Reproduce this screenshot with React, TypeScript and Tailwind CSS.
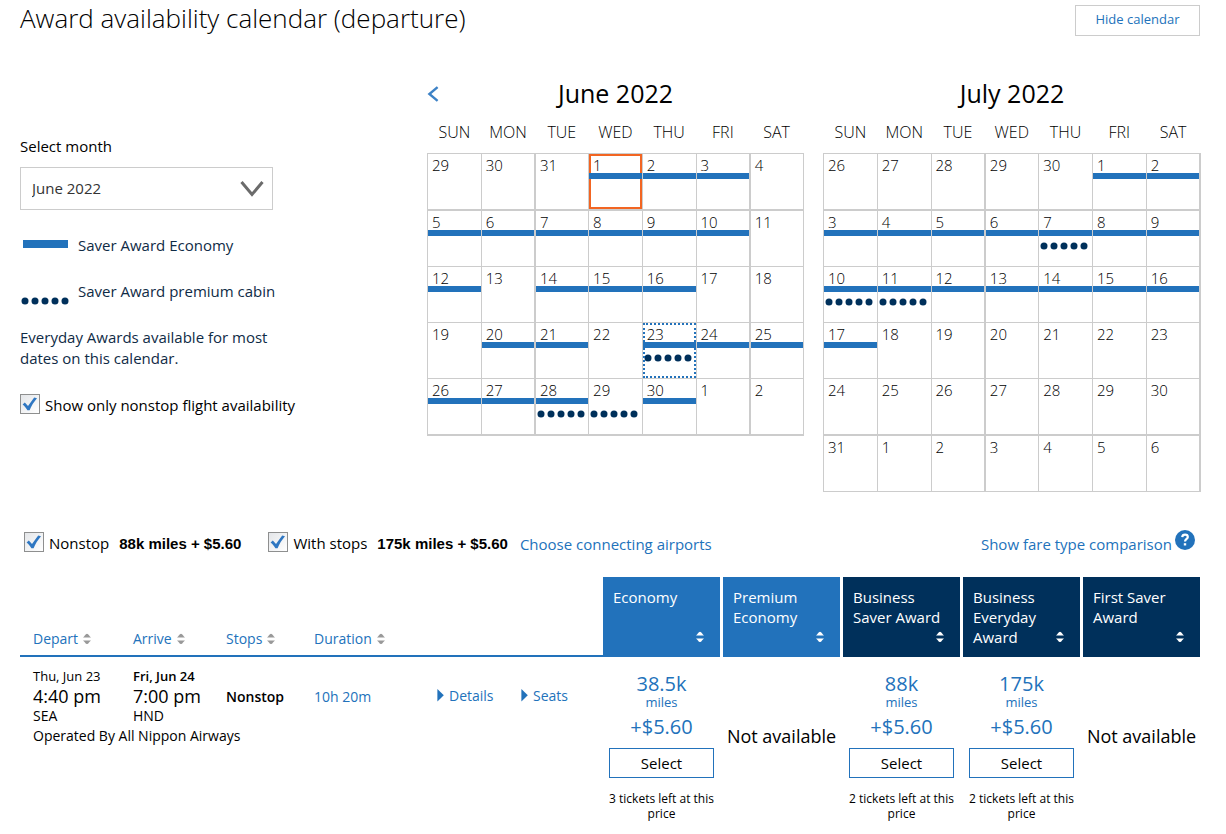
import { useState } from "react";
import clsx from "clsx";

type Day = {
  date: number;
  economy?: boolean;
  premium?: boolean;
  state?: "current" | "selected";
};

type Fare = {
  name: string;
  dark?: boolean;
  miles?: string;
  tickets?: number;
};

const weekDays = ["SUN", "MON", "TUE", "WED", "THU", "FRI", "SAT"];

// e = saver economy, p = saver premium cabin, b = both, c = current day, s = selected day
const parseDays = (source: string): Day[] =>
  source.split(" ").map((item) => {
    const flag = item.replace(/\d/g, "");
    return {
      date: parseInt(item),
      economy: flag === "e" || flag === "b" || flag === "c" || flag === "s",
      premium: flag === "p" || flag === "b" || flag === "s",
      state: flag === "c" ? "current" : flag === "s" ? "selected" : undefined,
    };
  });

const june = parseDays(
  "29 30 31 1c 2e 3e 4 5e 6e 7e 8e 9e 10e 11 12e 13 14e 15e 16e 17 18 19 20e 21e 22 23s 24e 25e 26e 27e 28b 29p 30e 1 2"
);
const july = parseDays(
  "26 27 28 29 30 1e 2e 3e 4e 5e 6e 7b 8e 9e 10b 11b 12e 13e 14e 15e 16e 17e 18 19 20 21 22 23 24 25 26 27 28 29 30 31 1 2 3 4 5 6"
);

const fares: Fare[] = [
  { name: "Economy", miles: "38.5k", tickets: 3 },
  { name: "Premium Economy" },
  { name: "Business Saver Award", dark: true, miles: "88k", tickets: 2 },
  { name: "Business Everyday Award", dark: true, miles: "175k", tickets: 2 },
  { name: "First Saver Award", dark: true },
];

const Dots = () => (
  <svg width="48" height="8" viewBox="0 0 48 8" fill="#00305b" className="block">
    {[4, 14, 24, 34, 44].map((x) => (
      <circle key={x} cx={x} cy="4" r="3.5" />
    ))}
  </svg>
);

const SortIcon = ({ className }: { className?: string }) => (
  <svg width="8" height="12" viewBox="0 0 8 12" fill="currentColor" className={className}>
    <path d="M0 4.4C1.6 3.6 2.4 .8 4 .8s2.4 2.8 4 3.6zM0 7.4h8C6.4 8.2 5.6 11 4 11S1.6 8.2 0 7.4z" />
  </svg>
);

const Checkbox = ({ id, label }: { id: string; label: string }) => {
  const [checked, setChecked] = useState(true);

  return (
    <div className="flex items-start gap-[5px]">
      <span className="relative size-5 shrink-0">
        <input
          type="checkbox"
          id={id}
          checked={checked}
          onChange={(e) => setChecked(e.target.checked)}
          className="block size-5 appearance-none border border-[#8e8f8f] bg-linear-to-br from-[#e4e6e9] to-white"
        />
        {checked && (
          <svg viewBox="0 0 20 20" className="pointer-events-none absolute inset-0 size-5" fill="#2f77c2">
            <path d="M2.6 10.4 4.8 8.6 8 12 14.2 3.4 17 4.2C13.8 8 11.2 12 9.6 16.2H7.4C6.2 13.8 4.6 12.2 2.6 10.4z" />
          </svg>
        )}
      </span>
      <label htmlFor={id} className="pt-px">
        {label}
      </label>
    </div>
  );
};

type CalendarProps = {
  title: string;
  days: Day[];
  hasPrev?: boolean;
  wideCols: number[];
};

const Calendar = ({ title, days, hasPrev, wideCols }: CalendarProps) => {
  const weeks = Array.from({ length: days.length / 7 }, (_, i) => days.slice(i * 7, i * 7 + 7));

  return (
    <table className="w-full table-fixed border-collapse self-start">
      <caption>
        <div className="grid h-9 grid-cols-[24px_1fr_24px] items-center text-[25px] leading-[34px]">
          {hasPrev ? (
            <button type="button" aria-label="Previous month">
              <svg width="12" height="16" viewBox="0 0 12 16" fill="none" stroke="#3d82c6" strokeWidth="2.4">
                <path d="M10.6 1.2 2.4 8l8.2 6.8" />
              </svg>
            </button>
          ) : (
            <span />
          )}
          <span className="pb-0.5">{title}</span>
        </div>
      </caption>
      <thead>
        <tr className="h-[41px]">
          {weekDays.map((day) => (
            <th key={day} scope="col" className="p-0 text-base font-light">
              {day}
            </th>
          ))}
        </tr>
      </thead>
      <tbody>
        {weeks.map((week, row) => (
          <tr key={row}>
            {week.map((day, col) => (
              <td
                key={col}
                className={clsx(
                  "border border-[#ccc] p-0",
                  (row === 0 || row === 4) && "border-b-2",
                  wideCols.includes(col) && "border-r-2"
                )}
              >
                <button
                  type="button"
                  className={clsx(
                    "flex h-[55px] w-full flex-col items-start text-[15px] font-light",
                    day.state === "current" && "ring-2 ring-[#f26522] ring-inset",
                    day.state === "selected" && "outline-2 -outline-offset-2 outline-[#2272bb] outline-dotted"
                  )}
                >
                  <span className="h-[19px] pl-1 leading-[22px]">{day.date}</span>
                  <span className={clsx("h-1.5 w-full", day.economy && "bg-[#2272bb]")} />
                  {day.premium && (
                    <span className="pt-1.5 pl-px">
                      <Dots />
                    </span>
                  )}
                </button>
              </td>
            ))}
          </tr>
        ))}
      </tbody>
    </table>
  );
};

const FareCell = ({ fare }: { fare: Fare }) => {
  if (!fare.miles) {
    return <p className="pb-1.5 text-[18px] leading-6 whitespace-nowrap">Not available</p>;
  }

  return (
    <div className="flex flex-col items-center">
      <p className="text-[20px] leading-5 text-[#2272bb]">{fare.miles}</p>
      <p className="text-[13px] leading-4 text-[#2272bb]">miles</p>
      <p className="pt-[5px] text-[20px] leading-6 text-[#2272bb]">+$5.60</p>
      <button type="button" className="mt-[9px] h-[30px] w-[105px] border border-[#2272bb] text-[15px]">
        Select
      </button>
      <p className="pt-[13px] text-[12px] leading-[15px]">{fare.tickets} tickets left at this price</p>
    </div>
  );
};

const App = () => {
  const [month, setMonth] = useState("June 2022");

  return (
    <main className="bg-white pr-[26px] pb-3 pl-5 font-['Open_Sans',sans-serif] text-[15px] leading-5 text-black">
      <header className="flex h-[76px] items-start justify-between">
        <h1 className="text-[26px] leading-9 font-light">Award availability calendar (departure)</h1>
        <button type="button" className="mt-[5px] h-[31px] w-[125px] border border-[#ccc] pb-1 text-[13px] text-[#2272bb]">
          Hide calendar
        </button>
      </header>

      <section className="flex">
        <div className="w-[407px] shrink-0 pt-[60px]">
          <label htmlFor="month" className="block leading-[21px]">
            Select month
          </label>
          <div className="relative mt-2.5 w-[253px]">
            <select
              id="month"
              value={month}
              onChange={(e) => setMonth(e.target.value)}
              className="h-[43px] w-full appearance-none border border-[#ccc] bg-white pb-0.5 pl-[11px] text-[#333]"
            >
              <option>June 2022</option>
              <option>July 2022</option>
            </select>
            <svg
              width="24"
              height="16"
              viewBox="0 0 24 16"
              fill="none"
              stroke="#6b6b6b"
              strokeWidth="3"
              className="pointer-events-none absolute top-3.5 right-[9px]"
            >
              <path d="M1.5 1 12 13.5 22.5 1" />
            </svg>
          </div>

          <div className="mt-[25px] flex items-start gap-2.5 text-[#0f2b46]">
            <span className="mt-[5px] ml-[3px] h-2 w-[45px] bg-[#2272bb]" />
            <span>Saver Award Economy</span>
          </div>
          <div className="mt-[26px] flex h-5 items-start gap-[9px] text-[#0f2b46]">
            <span className="mt-4 ml-px">
              <Dots />
            </span>
            <span>Saver Award premium cabin</span>
          </div>
          <p className="mt-[26px] w-[253px] leading-[21px] text-[#0f2b46]">
            Everyday Awards available for most dates on this calendar.
          </p>
          <div className="mt-[25px]">
            <Checkbox id="nonstop-only" label="Show only nonstop flight availability" />
          </div>
        </div>

        <div className="-mr-px grid flex-1 grid-cols-[377fr_378fr] gap-[19px]">
          <Calendar title="June 2022" days={june} wideCols={[1, 5]} hasPrev />
          <Calendar title="July 2022" days={july} wideCols={[2, 6]} />
        </div>
      </section>

      <section className="mt-[38px] flex h-7 items-start justify-between">
        <div className="flex items-start pt-0.5 pl-1">
          <Checkbox id="nonstop" label="Nonstop" />
          <b className="ml-2.5 pt-0.5 font-['Liberation_Sans',sans-serif]">88k miles + $5.60</b>
          <div className="ml-[27px]">
            <Checkbox id="with-stops" label="With stops" />
          </div>
          <b className="ml-2.5 pt-0.5 font-['Liberation_Sans',sans-serif]">175k miles + $5.60</b>
          <a href="#airports" className="ml-3 pt-0.5 text-[#2272bb]">
            Choose connecting airports
          </a>
        </div>
        <a href="#fares" className="flex items-start gap-[3px] pr-[5px] text-[#2272bb]">
          <span className="pt-1">Show fare type comparison</span>
          <svg width="20" height="20" viewBox="0 0 20 20" fill="none" stroke="#fff">
            <circle cx="10" cy="10" r="10" fill="#2272bb" stroke="none" />
            <path d="M7.2 7.2C7.4 5.4 8.6 4.7 10 4.7c1.6 0 2.8.9 2.8 2.3 0 1.9-2.8 2-2.8 4.6" strokeWidth="2.2" />
            <path d="M10 13.2v2.3" strokeWidth="2.4" />
          </svg>
        </a>
      </section>

      <table className="mt-[19px] w-full table-fixed border-separate border-spacing-0 text-[14px]">
        <colgroup>
          <col className="w-[100px]" />
          <col className="w-[93px]" />
          <col className="w-[88px]" />
          <col className="w-[122px]" />
          <col className="w-[84px]" />
          <col />
          <col className="w-[117px]" />
          <col className="w-[120px]" />
          <col className="w-[120px]" />
          <col className="w-[120px]" />
          <col className="w-[120px]" />
        </colgroup>
        <thead>
          <tr className="h-20">
            {["Depart", "Arrive", "Stops", "Duration"].map((name) => (
              <th key={name} scope="col" className="border-b-2 border-[#2272bb] p-0 pb-1.5 pl-[13px] text-left align-bottom font-normal">
                <button type="button" className="flex items-center gap-[5px] text-[#2272bb]">
                  {name}
                  <SortIcon className="text-[#999]" />
                </button>
              </th>
            ))}
            <td colSpan={2} className="border-b-2 border-[#2272bb] p-0" />
            {fares.map((fare, i) => (
              <th key={fare.name} scope="col" className={clsx("p-0 text-left text-[15px] font-normal text-white", i > 0 && "pl-[3px]")}>
                <button
                  type="button"
                  className={clsx("flex h-20 w-full items-end justify-between pr-4 pl-2.5 text-left", fare.dark ? "bg-[#00305b]" : "bg-[#2272bb]")}
                >
                  <span className="w-[92px] shrink-0 self-start pt-2.5">{fare.name}</span>
                  <SortIcon className="mb-3.5 -ml-2.5 shrink-0" />
                </button>
              </th>
            ))}
          </tr>
        </thead>
        <tbody>
          <tr className="h-[69px]">
            <td className="p-0 pt-[9px] pl-[13px] align-top">
              <p className="text-[13px]">Thu, Jun 23</p>
              <p className="text-[18px]">4:40 pm</p>
              <p>SEA</p>
            </td>
            <td className="p-0 pt-[9px] pl-[13px] align-top">
              <p className="text-[13px] font-semibold">Fri, Jun 24</p>
              <p className="text-[18px]">7:00 pm</p>
              <p>HND</p>
            </td>
            <td className="p-0 pt-[30px] pl-[13px] align-top font-semibold">Nonstop</td>
            <td className="p-0 pt-[30px] pl-[13px] align-top text-[#2272bb]">10h 20m</td>
            {["Details", "Seats"].map((name) => (
              <td key={name} className="p-0 pt-[29px] pl-3.5 align-top">
                <a href="#flight" className="flex items-center gap-[5px] text-[#2272bb]">
                  <svg width="7" height="13" viewBox="0 0 7 13" fill="#2272bb">
                    <path d="M.4 0 6.8 6.2 .4 12.4z" />
                  </svg>
                  {name}
                </a>
              </td>
            ))}
            {fares.map((fare, i) => (
              <td
                key={fare.name}
                rowSpan={2}
                className={clsx("p-0 text-center", fare.miles ? "pt-[17px] align-top" : "align-middle", i > 0 && "pl-[3px]")}
              >
                <FareCell fare={fare} />
              </td>
            ))}
          </tr>
          <tr>
            <td colSpan={6} className="p-0 pl-[13px] align-top">
              Operated By All Nippon Airways
            </td>
          </tr>
        </tbody>
      </table>
    </main>
  );
};

export default App;
